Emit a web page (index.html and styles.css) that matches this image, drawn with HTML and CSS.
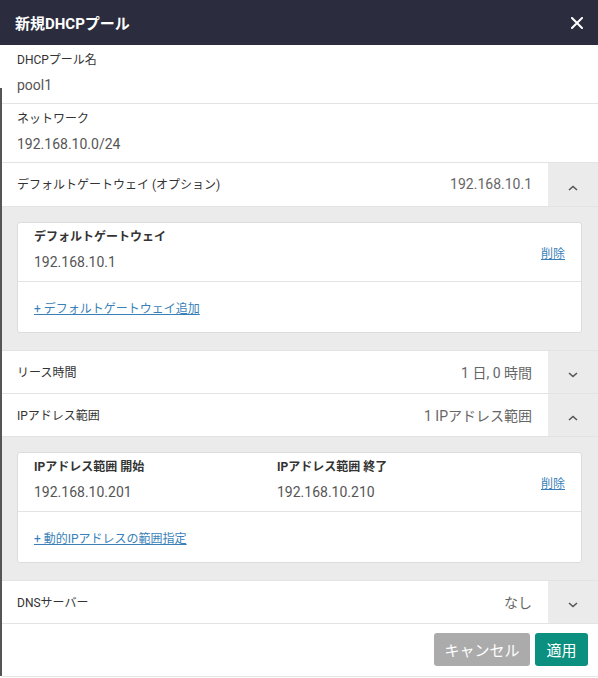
FILE: index.html
```html
<!DOCTYPE html>
<html lang="ja">
<head>
<meta charset="utf-8">
<title>新規DHCPプール</title>
<link rel="stylesheet" href="styles.css">
</head>
<body>
<div class="page">
  <div class="dialog">
    <header class="head">
      <h1 class="title">新規DHCPプール</h1>
      <button class="close" aria-label="閉じる">
        <svg width="12" height="12" viewBox="0 0 12 12"><path d="M1 1L11 11M11 1L1 11" stroke="#fff" stroke-width="2" stroke-linecap="square"/></svg>
      </button>
    </header>

    <div class="field">
      <div class="label">DHCPプール名</div>
      <div class="value">pool1</div>
    </div>
    <div class="field">
      <div class="label">ネットワーク</div>
      <div class="value">192.168.10.0/24</div>
    </div>

    <div class="row tall">
      <div class="row-label">デフォルトゲートウェイ (オプション)</div>
      <div class="row-value">192.168.10.1</div>
      <div class="toggle"><svg width="12" height="8" viewBox="0 0 12 8"><path d="M2 6L6 2.5L10 6" fill="none" stroke="#555" stroke-width="1.6"/></svg></div>
    </div>
    <div class="panel">
      <div class="card">
        <div class="card-row">
          <div class="col">
            <div class="card-label">デフォルトゲートウェイ</div>
            <div class="card-value">192.168.10.1</div>
          </div>
          <a class="link del" href="#">削除</a>
        </div>
        <div class="card-add"><a class="link" href="#">+ デフォルトゲートウェイ追加</a></div>
      </div>
    </div>

    <div class="row">
      <div class="row-label">リース時間</div>
      <div class="row-value">1 日, 0 時間</div>
      <div class="toggle"><svg width="12" height="8" viewBox="0 0 12 8"><path d="M2 2L6 5.5L10 2" fill="none" stroke="#555" stroke-width="1.6"/></svg></div>
    </div>
    <div class="row">
      <div class="row-label">IPアドレス範囲</div>
      <div class="row-value">1 IPアドレス範囲</div>
      <div class="toggle"><svg width="12" height="8" viewBox="0 0 12 8"><path d="M2 6L6 2.5L10 6" fill="none" stroke="#555" stroke-width="1.6"/></svg></div>
    </div>
    <div class="panel">
      <div class="card">
        <div class="card-row">
          <div class="col">
            <div class="card-label">IPアドレス範囲 開始</div>
            <div class="card-value">192.168.10.201</div>
          </div>
          <div class="col">
            <div class="card-label">IPアドレス範囲 終了</div>
            <div class="card-value">192.168.10.210</div>
          </div>
          <a class="link del" href="#">削除</a>
        </div>
        <div class="card-add"><a class="link" href="#">+ 動的IPアドレスの範囲指定</a></div>
      </div>
    </div>

    <div class="row">
      <div class="row-label">DNSサーバー</div>
      <div class="row-value">なし</div>
      <div class="toggle"><svg width="12" height="8" viewBox="0 0 12 8"><path d="M2 2L6 5.5L10 2" fill="none" stroke="#555" stroke-width="1.6"/></svg></div>
    </div>

    <footer class="foot">
      <button class="btn cancel">キャンセル</button>
      <button class="btn apply">適用</button>
    </footer>
  </div>
</div>
</body>
</html>
```

FILE: styles.css
```css
* { box-sizing: border-box; }
html, body { margin: 0; padding: 0; }
body {
  font-family: Roboto, "Noto Sans CJK JP", sans-serif;
  color: #333;
  background: #fff;
}
.page {
  width: 598px;
  height: 678px;
  background: linear-gradient(to bottom, #2b2d3e 0, #2b2d3e 45px, #fff 45px, #fff 88px, #555 88px, #555 676px, #fff 676px);
  padding-left: 2px;
}
.dialog {
  background: #fff;
  height: 677px;
  border-bottom: 1px solid #e6e6e6;
}
.head {
  height: 45px;
  background: #2b2d3e;
  display: flex;
  align-items: center;
  justify-content: space-between;
  padding: 0 15px;
  margin-left: -2px;
}
.title {
  margin: 0;
  font-size: 15px;
  font-weight: 700;
  color: #fff;
}
.close {
  background: none;
  border: 0;
  padding: 0;
  width: 12px;
  height: 12px;
  display: flex;
  cursor: pointer;
}
.field {
  padding: 7px 15px 8px;
  border-bottom: 1px solid #e3e3e3;
}
.label {
  font-size: 12px;
  line-height: 16px;
  color: #333;
}
.value {
  font-size: 14px;
  line-height: 20px;
  margin-top: 7px;
  color: #555;
}
.row {
  display: flex;
  align-items: stretch;
  height: 43px;
  border-bottom: 1px solid #e3e3e3;
}
.row.tall {
  height: 44px;
}
.row-label {
  flex: 1;
  display: flex;
  align-items: center;
  padding-left: 15px;
  padding-bottom: 2px;
  font-size: 12px;
  color: #333;
}
.row-value {
  display: flex;
  align-items: center;
  padding-right: 16px;
  padding-bottom: 1px;
  font-size: 14px;
  color: #666;
}
.toggle {
  width: 50px;
  background: #ebebeb;
  display: flex;
  align-items: center;
  justify-content: center;
  padding-top: 6px;
}
.panel {
  background: #ebebeb;
  padding: 15px 16px 17px 15px;
  border-bottom: 1px solid #e3e3e3;
}
.card {
  background: #fff;
  border: 1px solid #dcdcdc;
  border-radius: 3px;
}
.card-row {
  display: flex;
  align-items: flex-start;
  height: 59px;
  padding: 6px 16px 0;
  border-bottom: 1px solid #e3e3e3;
}
.col {
  width: 243px;
}
.card-label {
  font-size: 12px;
  font-weight: 700;
  line-height: 16px;
  color: #333;
}
.card-value {
  font-size: 14px;
  line-height: 20px;
  margin-top: 7px;
  color: #555;
}
.del {
  margin-left: auto;
  align-self: center;
  margin-top: -6px;
}
.link {
  color: #3a7fb8;
  text-decoration: underline;
  font-size: 12px;
}
.card-add {
  height: 50px;
  display: flex;
  align-items: center;
  padding: 0 16px;
}
.foot {
  display: flex;
  justify-content: flex-end;
  gap: 5px;
  padding: 9px 10px 0 0;
}
.btn {
  border: 0;
  border-radius: 3px;
  height: 33px;
  font-family: Roboto, "Noto Sans CJK JP", sans-serif;
  font-size: 15px;
  color: #fff;
  padding: 0;
  white-space: nowrap;
}
.cancel {
  background: #ababab;
  width: 96px;
}
.apply {
  background: #0b8f7f;
  width: 53px;
}
```
